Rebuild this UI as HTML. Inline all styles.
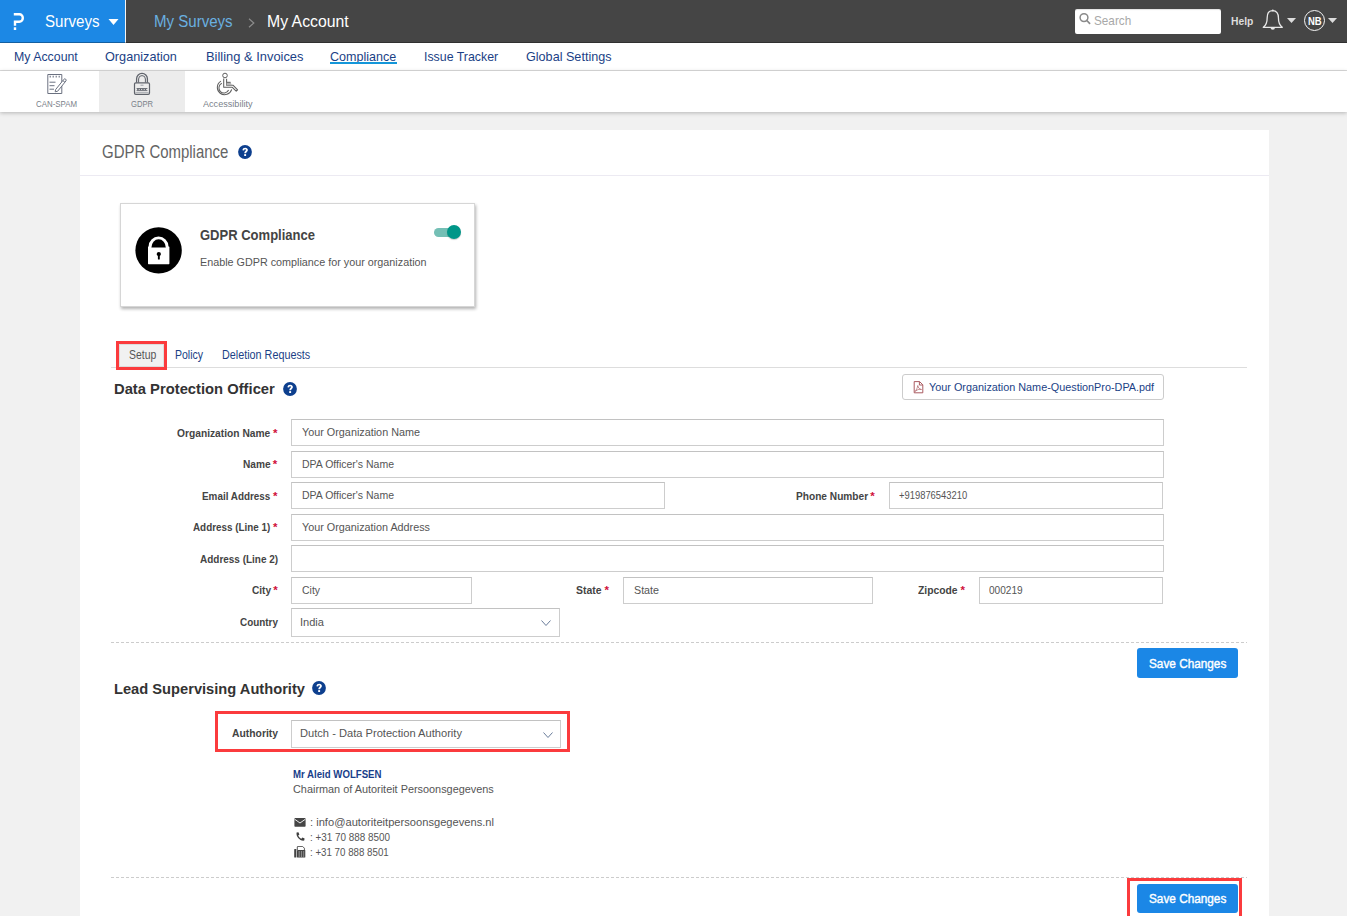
<!DOCTYPE html>
<html><head><meta charset="utf-8"><title>GDPR Compliance</title>
<style>
html,body{margin:0;padding:0;}
body{width:1347px;height:916px;overflow:hidden;position:relative;background:#f1f1f1;font-family:"Liberation Sans",sans-serif;}
.t{position:absolute;white-space:nowrap;line-height:1;}
.inp{position:absolute;box-sizing:border-box;border:1px solid #cdcdcd;border-top-color:#c2c2c2;background:#fff;}
</style></head><body>

<div style="position:absolute;left:0;top:0;width:1347px;height:43px;background:#454545"></div>
<div style="position:absolute;left:0;top:0;width:125px;height:43px;background:#1c88e5"></div>
<div style="position:absolute;left:125px;top:0;width:1px;height:43px;background:#f4f4f4"></div>
<div style="position:absolute;left:0;top:42px;width:1347px;height:1px;background:rgba(0,0,0,.3)"></div>
<div style="position:absolute;left:1075px;top:9px;width:146px;height:25px;background:#fff;border-radius:2px;box-shadow:inset 0 1px 1px rgba(0,0,0,.12)"></div>
<div style="position:absolute;left:0;top:43px;width:1347px;height:27px;background:#fff"></div>
<div style="position:absolute;left:0;top:70px;width:1347px;height:1px;background:#dcdcdc"></div>
<div style="position:absolute;left:0;top:71px;width:1347px;height:41px;background:#fff;box-shadow:0 1px 4px rgba(0,0,0,.25)"></div>
<div style="position:absolute;left:99px;top:71px;width:86px;height:41px;background:#ececec"></div>
<div style="position:absolute;left:80px;top:130px;width:1189px;height:800px;background:#fff"></div>
<div style="position:absolute;left:80px;top:175px;width:1189px;height:1px;background:#eceaf2"></div>
<div class="t" style="left:44.50px;top:14px;font-size:16px;transform:scaleX(0.9436);transform-origin:0 0;color:#fff;">Surveys</div><div class="t" style="left:154.40px;top:14px;font-size:16px;transform:scaleX(0.9402);transform-origin:0 0;color:#6ab0e0;">My Surveys</div><div class="t" style="left:267.00px;top:14px;font-size:16px;transform:scaleX(0.9877);transform-origin:0 0;color:#fff;">My Account</div><div class="t" style="left:1230.70px;top:16px;font-size:11.5px;transform:scaleX(0.8957);transform-origin:0 0;color:#ddd;font-weight:bold;">Help</div><div class="t" style="left:1308.20px;top:16px;font-size:11px;transform:scaleX(0.8619);transform-origin:0 0;color:#fff;font-weight:bold;">NB</div><div class="t" style="left:1093.80px;top:14px;font-size:13.5px;transform:scaleX(0.8693);transform-origin:0 0;color:#a8a8a8;">Search</div><div class="t" style="left:14.00px;top:50px;font-size:13.5px;transform:scaleX(0.9141);transform-origin:0 0;color:#1b3f86;">My Account</div><div class="t" style="left:105.40px;top:50px;font-size:13.5px;transform:scaleX(0.9393);transform-origin:0 0;color:#1b3f86;">Organization</div><div class="t" style="left:205.50px;top:50px;font-size:13.5px;transform:scaleX(0.9553);transform-origin:0 0;color:#1b3f86;">Billing &amp; Invoices</div><div class="t" style="left:330.20px;top:50px;font-size:13.5px;transform:scaleX(0.9287);transform-origin:0 0;color:#1b3f86;">Compliance</div><div class="t" style="left:424.00px;top:50px;font-size:13.5px;transform:scaleX(0.9160);transform-origin:0 0;color:#1b3f86;">Issue Tracker</div><div class="t" style="left:525.50px;top:50px;font-size:13.5px;transform:scaleX(0.9341);transform-origin:0 0;color:#1b3f86;">Global Settings</div><div style="position:absolute;left:330px;top:62px;width:67px;height:2px;background:#1396d9"></div><div class="t" style="left:36.00px;top:99px;font-size:9.5px;transform:scaleX(0.8292);transform-origin:0 0;color:#7a7f8a;">CAN-SPAM</div><div class="t" style="left:131.00px;top:99px;font-size:9.5px;transform:scaleX(0.8013);transform-origin:0 0;color:#7a7f8a;">GDPR</div><div class="t" style="left:202.70px;top:99px;font-size:9.5px;transform:scaleX(0.9569);transform-origin:0 0;color:#7a7f8a;">Accessibility</div><div class="t" style="left:102.40px;top:144px;font-size:17.5px;transform:scaleX(0.8548);transform-origin:0 0;color:#646464;">GDPR Compliance</div><div style="position:absolute;left:120px;top:203px;width:353px;height:102px;border:1px solid #d6d6d6;background:#fff;box-shadow:1px 2px 3px rgba(0,0,0,.3)"></div><div class="t" style="left:200.30px;top:228px;font-size:14px;transform:scaleX(0.9297);transform-origin:0 0;color:#444;font-weight:bold;">GDPR Compliance</div><div class="t" style="left:200.00px;top:257px;font-size:11px;transform:scaleX(0.9801);transform-origin:0 0;color:#555;">Enable GDPR compliance for your organization</div><div style="position:absolute;left:111px;top:367px;width:1136px;height:1px;background:#ddd"></div><div style="position:absolute;left:119px;top:344px;width:45px;height:23px;background:#f1f1f1;border:1px solid #ddd;box-sizing:border-box"></div><div style="position:absolute;left:116px;top:341px;width:51px;height:29px;border:3px solid #fb3b3d;box-sizing:border-box"></div><div class="t" style="left:128.70px;top:349px;font-size:12px;transform:scaleX(0.8700);transform-origin:0 0;color:#555;">Setup</div><div class="t" style="left:174.90px;top:349px;font-size:12px;transform:scaleX(0.8770);transform-origin:0 0;color:#1b3f86;">Policy</div><div class="t" style="left:221.80px;top:349px;font-size:12px;transform:scaleX(0.8996);transform-origin:0 0;color:#1b3f86;">Deletion Requests</div><div class="t" style="left:114.00px;top:381px;font-size:15.5px;transform:scaleX(0.9526);transform-origin:0 0;color:#333;font-weight:bold;">Data Protection Officer</div><div style="position:absolute;left:902px;top:374px;width:262px;height:26px;border:1px solid #ccc;border-radius:3px;box-sizing:border-box"></div><div class="t" style="left:928.50px;top:382px;font-size:11.5px;transform:scaleX(0.9415);transform-origin:0 0;color:#1b3f86;">Your Organization Name-QuestionPro-DPA.pdf</div><div class="inp" style="left:291px;top:419px;width:873px;height:27px"></div><div class="inp" style="left:291px;top:451px;width:873px;height:27px"></div><div class="inp" style="left:291px;top:482px;width:374px;height:27px"></div><div class="inp" style="left:889px;top:482px;width:274px;height:27px"></div><div class="inp" style="left:291px;top:514px;width:873px;height:27px"></div><div class="inp" style="left:291px;top:545px;width:873px;height:27px"></div><div class="inp" style="left:291px;top:577px;width:181px;height:27px"></div><div class="inp" style="left:623px;top:577px;width:250px;height:27px"></div><div class="inp" style="left:979px;top:577px;width:184px;height:27px"></div><div class="inp" style="left:291px;top:608px;width:269px;height:29px"></div><div class="inp" style="left:291px;top:720px;width:270px;height:28px"></div><div class="t" style="left:176.90px;top:428px;font-size:11px;transform:scaleX(0.9305);transform-origin:0 0;color:#444;font-weight:bold;">Organization Name</div><div class="t" style="left:272.90px;top:428px;font-size:11.5px;color:#d0103a;font-weight:bold;">*</div><div class="t" style="left:242.50px;top:459px;font-size:11px;transform:scaleX(0.9208);transform-origin:0 0;color:#444;font-weight:bold;">Name</div><div class="t" style="left:272.80px;top:459px;font-size:11.5px;color:#d0103a;font-weight:bold;">*</div><div class="t" style="left:201.90px;top:491px;font-size:11px;transform:scaleX(0.8986);transform-origin:0 0;color:#444;font-weight:bold;">Email Address</div><div class="t" style="left:272.90px;top:491px;font-size:11.5px;color:#d0103a;font-weight:bold;">*</div><div class="t" style="left:193.00px;top:522px;font-size:11px;transform:scaleX(0.8957);transform-origin:0 0;color:#444;font-weight:bold;">Address (Line 1)</div><div class="t" style="left:272.90px;top:522px;font-size:11.5px;color:#d0103a;font-weight:bold;">*</div><div class="t" style="left:199.90px;top:554px;font-size:11px;transform:scaleX(0.9062);transform-origin:0 0;color:#444;font-weight:bold;">Address (Line 2)</div><div class="t" style="left:251.50px;top:585px;font-size:11px;transform:scaleX(0.9187);transform-origin:0 0;color:#444;font-weight:bold;">City</div><div class="t" style="left:273.30px;top:585px;font-size:11.5px;color:#d0103a;font-weight:bold;">*</div><div class="t" style="left:239.60px;top:617px;font-size:11px;transform:scaleX(0.9008);transform-origin:0 0;color:#444;font-weight:bold;">Country</div><div class="t" style="left:795.50px;top:491px;font-size:11px;transform:scaleX(0.9219);transform-origin:0 0;color:#444;font-weight:bold;">Phone Number</div><div class="t" style="left:870.30px;top:491px;font-size:11.5px;color:#d0103a;font-weight:bold;">*</div><div class="t" style="left:576.30px;top:585px;font-size:11px;transform:scaleX(0.9481);transform-origin:0 0;color:#444;font-weight:bold;">State</div><div class="t" style="left:604.50px;top:585px;font-size:11.5px;color:#d0103a;font-weight:bold;">*</div><div class="t" style="left:918.30px;top:585px;font-size:11px;transform:scaleX(0.9364);transform-origin:0 0;color:#444;font-weight:bold;">Zipcode</div><div class="t" style="left:960.50px;top:585px;font-size:11.5px;color:#d0103a;font-weight:bold;">*</div><div class="t" style="left:301.50px;top:427px;font-size:11px;transform:scaleX(0.9828);transform-origin:0 0;color:#555;">Your Organization Name</div><div class="t" style="left:301.50px;top:459px;font-size:11px;transform:scaleX(0.9537);transform-origin:0 0;color:#555;">DPA Officer's Name</div><div class="t" style="left:301.50px;top:490px;font-size:11px;transform:scaleX(0.9537);transform-origin:0 0;color:#555;">DPA Officer's Name</div><div class="t" style="left:301.50px;top:522px;font-size:11px;transform:scaleX(0.9811);transform-origin:0 0;color:#555;">Your Organization Address</div><div class="t" style="left:899.20px;top:490px;font-size:11px;transform:scaleX(0.8540);transform-origin:0 0;color:#555;">+919876543210</div><div class="t" style="left:301.80px;top:585px;font-size:11px;transform:scaleX(0.9514);transform-origin:0 0;color:#555;">City</div><div class="t" style="left:633.60px;top:585px;font-size:11px;transform:scaleX(0.9733);transform-origin:0 0;color:#555;">State</div><div class="t" style="left:988.60px;top:585px;font-size:11px;transform:scaleX(0.9186);transform-origin:0 0;color:#555;">000219</div><div class="t" style="left:300.20px;top:617px;font-size:11px;transform:scaleX(1.0054);transform-origin:0 0;color:#555;">India</div><div class="t" style="left:300.10px;top:728px;font-size:11px;transform:scaleX(1.0111);transform-origin:0 0;color:#555;">Dutch - Data Protection Authority</div><svg style="position:absolute;left:541px;top:620px" width="10" height="6" viewBox="0 0 10 6"><path d="M0.5 0.5 L5.0 5.5 L9.5 0.5" fill="none" stroke="#6a7c9a" stroke-width="1"/></svg><svg style="position:absolute;left:543px;top:732px" width="10" height="6" viewBox="0 0 10 6"><path d="M0.5 0.5 L5.0 5.5 L9.5 0.5" fill="none" stroke="#6a7c9a" stroke-width="1"/></svg><div style="position:absolute;left:111px;top:642px;width:1136px;height:1px;background:repeating-linear-gradient(90deg,#ccc 0 3px,transparent 3px 5px)"></div><div style="position:absolute;left:111px;top:877px;width:1136px;height:1px;background:repeating-linear-gradient(90deg,#ccc 0 3px,transparent 3px 5px)"></div><div style="position:absolute;left:1137px;top:648px;width:101px;height:30px;background:#1b87e6;border-radius:3px"></div><div class="t" style="left:1148.90px;top:657px;font-size:13px;transform:scaleX(0.9064);transform-origin:0 0;color:#fff;-webkit-text-stroke:0.4px #fff;">Save Changes</div><div style="position:absolute;left:1127px;top:878px;width:115px;height:60px;border:3px solid #fb3b3d;box-sizing:border-box"></div><div style="position:absolute;left:1137px;top:884px;width:101px;height:29px;background:#1b87e6;border-radius:3px"></div><div class="t" style="left:1148.90px;top:892px;font-size:13px;transform:scaleX(0.9064);transform-origin:0 0;color:#fff;-webkit-text-stroke:0.4px #fff;">Save Changes</div><div class="t" style="left:113.60px;top:681px;font-size:15.5px;transform:scaleX(0.9464);transform-origin:0 0;color:#333;font-weight:bold;">Lead Supervising Authority</div><div style="position:absolute;left:215px;top:711px;width:355px;height:41px;border:3px solid #fb3b3d;box-sizing:border-box"></div><div class="t" style="left:231.50px;top:728px;font-size:11px;transform:scaleX(0.9408);transform-origin:0 0;color:#444;font-weight:bold;">Authority</div><div class="t" style="left:293.20px;top:769px;font-size:11px;transform:scaleX(0.8759);transform-origin:0 0;color:#183e8a;font-weight:bold;">Mr Aleid WOLFSEN</div><div class="t" style="left:293.20px;top:784px;font-size:11px;transform:scaleX(0.9891);transform-origin:0 0;color:#555;">Chairman of Autoriteit Persoonsgegevens</div><div class="t" style="left:309.50px;top:817px;font-size:11px;transform:scaleX(1.0122);transform-origin:0 0;color:#555;">: info@autoriteitpersoonsgegevens.nl</div><div class="t" style="left:309.50px;top:832px;font-size:11px;transform:scaleX(0.8990);transform-origin:0 0;color:#555;">: +31 70 888 8500</div><div class="t" style="left:309.50px;top:847px;font-size:11px;transform:scaleX(0.8844);transform-origin:0 0;color:#555;">: +31 70 888 8501</div>
<!-- logo -->
<svg style="position:absolute;left:0;top:0" width="40" height="42" viewBox="0 0 40 42">
<path d="M13.8 13 H19.4 A4.6 5 0 0 1 19.4 23 H16.2 V25.8 H13.8 V20.6 H19.3 A2.3 2.6 0 0 0 19.3 15.4 H13.8 Z" fill="#fff"/>
<rect x="13.8" y="27.3" width="2.4" height="2.7" fill="#fff"/>
</svg>
<!-- surveys caret -->
<svg style="position:absolute;left:108px;top:19px" width="11" height="6" viewBox="0 0 11 6"><path d="M0.5 0 H10.5 L5.5 6 Z" fill="#fff"/></svg>
<!-- breadcrumb chevron -->
<svg style="position:absolute;left:248px;top:18px" width="7" height="10" viewBox="0 0 7 10"><path d="M1 0.8 L5.8 5 L1 9.2" fill="none" stroke="#8c8c8c" stroke-width="1.2"/></svg>
<!-- search box -->
<svg style="position:absolute;left:1078px;top:12px" width="14" height="14" viewBox="0 0 14 14"><circle cx="6" cy="5.6" r="3.9" fill="none" stroke="#8a8a8a" stroke-width="1.5"/><path d="M8.8 8.5 L11.6 11.3" stroke="#8a8a8a" stroke-width="1.7" stroke-linecap="round"/></svg>
<!-- bell -->
<svg style="position:absolute;left:1262px;top:9px" width="22" height="23" viewBox="0 0 22 23">
<path d="M10.8 1.6 C7 1.6 5.2 4.5 5.2 8.5 C5.2 13 4.6 16 1.3 18.3 H20.3 C17 16 16.4 13 16.4 8.5 C16.4 4.5 14.6 1.6 10.8 1.6 Z" fill="none" stroke="#e8e8e8" stroke-width="1.3" stroke-linejoin="round"/>
<circle cx="10.8" cy="1.5" r="1" fill="#e8e8e8"/>
<path d="M8.6 18.6 A2.2 2.2 0 0 0 13 18.6 Z" fill="#e8e8e8"/>
</svg>
<svg style="position:absolute;left:1287px;top:18px" width="9" height="5" viewBox="0 0 9 5"><path d="M0 0 H9 L4.5 5 Z" fill="#dcdcdc"/></svg>
<!-- avatar -->
<div style="position:absolute;left:1303.8px;top:9.9px;width:21.2px;height:21.2px;box-sizing:border-box;border:1.5px solid #f6f6f6;border-radius:50%"></div>
<svg style="position:absolute;left:1328px;top:18px" width="9" height="5" viewBox="0 0 9 5"><path d="M0 0 H9 L4.5 5 Z" fill="#dcdcdc"/></svg>

<!-- subnav icons -->
<svg style="position:absolute;left:45px;top:72px" width="24" height="24" viewBox="0 0 24 24">
<path d="M2.8 2.5 H16.8 V21.5 H2.8 Z" fill="none" stroke="#6b7180" stroke-width="1"/>
<path d="M5.2 3.8 v1.6 M8.2 3.8 v1.6 M11.2 3.8 v1.6 M14.2 3.8 v1.6" stroke="#6b7180" stroke-width="1.1"/>
<path d="M4.5 10.2 H10.5 M4.5 13.7 H9.5 M4.5 17.2 H9" stroke="#6b7180" stroke-width="1"/>
<path d="M10.6 17.6 L18.8 7.4 A1.3 1.3 0 0 1 20.9 9 L12.7 19.2 L10.2 19.8 Z" fill="#fff" stroke="#6b7180" stroke-width="1"/>
<path d="M17.9 8.6 L20 10.3" stroke="#6b7180" stroke-width="1"/>
</svg>
<svg style="position:absolute;left:132px;top:72px" width="21" height="24" viewBox="0 0 21 24">
<path d="M4.6 10.5 V6.8 A5.4 5.4 0 0 1 15.4 6.8 V10.5" fill="none" stroke="#5f636b" stroke-width="1.3"/>
<path d="M6.6 10.5 V7 A3.4 3.4 0 0 1 13.4 7 V10.5" fill="none" stroke="#5f636b" stroke-width="1"/>
<rect x="2.5" y="10.8" width="15" height="11.6" rx="1.3" fill="none" stroke="#5f636b" stroke-width="1.2"/>
<path d="M8.5 13.2 H11.5" stroke="#9a9ea6" stroke-width="1"/>
<path d="M4.6 16.5 H15.4 M4.6 18.6 H15.4" stroke="#5f636b" stroke-width="0.9"/>
<path d="M5.2 17.5 h1.5 M7.7 17.5 h1.5 M10.2 17.5 h1.5 M12.7 17.5 h1.5" stroke="#5f636b" stroke-width="1"/>
<path d="M3.4 20.6 H16.6" stroke="#9a9ea6" stroke-width="0.8"/>
</svg>
<svg style="position:absolute;left:214px;top:72px" width="26" height="24" viewBox="0 0 26 24">
<circle cx="11" cy="3.5" r="2.3" fill="none" stroke="#5f5f5f" stroke-width="1"/>
<path d="M9.7 6.4 V15.3 H18.3 L22.2 19.2 L23.6 17.8 L19.2 13.3 H12.6 V6.7" fill="none" stroke="#5f5f5f" stroke-width="1.05" stroke-linejoin="round"/>
<path d="M12.6 10.3 H16.6 L17.9 13.2 H12.6 Z" fill="#b4b4b4"/>
<path d="M12.6 10.3 H16.6" stroke="#5f5f5f" stroke-width="1"/>
<path d="M7.0 9.1 A7.3 7.3 0 1 0 17.7 17.3" fill="none" stroke="#5f5f5f" stroke-width="1.05"/>
<path d="M7.8 11.3 A5.1 5.1 0 1 0 14.6 18.1" fill="none" stroke="#5f5f5f" stroke-width="1.05"/>
</svg>

<!-- help icons -->
<svg style="position:absolute;left:237.8px;top:145.1px" width="14" height="14" viewBox="0 0 14 14"><circle cx="7" cy="7" r="6.9" fill="#0d3f8e"/><path d="M4.4 5.2 C4.6 3.5 5.7 2.7 7.2 2.7 C8.9 2.7 9.9 3.7 9.9 5 C9.9 6.6 8.2 6.9 8.1 8.2 H6.3 C6.2 6.2 8 5.9 8 5 C8 4.5 7.6 4.2 7.1 4.2 C6.5 4.2 6.2 4.6 6.1 5.4 Z" fill="#fff"/><rect x="6.2" y="9.1" width="1.9" height="1.9" fill="#fff"/></svg>
<svg style="position:absolute;left:282.5px;top:381.7px" width="14" height="14" viewBox="0 0 14 14"><circle cx="7" cy="7" r="6.9" fill="#0d3f8e"/><path d="M4.4 5.2 C4.6 3.5 5.7 2.7 7.2 2.7 C8.9 2.7 9.9 3.7 9.9 5 C9.9 6.6 8.2 6.9 8.1 8.2 H6.3 C6.2 6.2 8 5.9 8 5 C8 4.5 7.6 4.2 7.1 4.2 C6.5 4.2 6.2 4.6 6.1 5.4 Z" fill="#fff"/><rect x="6.2" y="9.1" width="1.9" height="1.9" fill="#fff"/></svg>
<svg style="position:absolute;left:312px;top:681.4px" width="14" height="14" viewBox="0 0 14 14"><circle cx="7" cy="7" r="6.9" fill="#0d3f8e"/><path d="M4.4 5.2 C4.6 3.5 5.7 2.7 7.2 2.7 C8.9 2.7 9.9 3.7 9.9 5 C9.9 6.6 8.2 6.9 8.1 8.2 H6.3 C6.2 6.2 8 5.9 8 5 C8 4.5 7.6 4.2 7.1 4.2 C6.5 4.2 6.2 4.6 6.1 5.4 Z" fill="#fff"/><rect x="6.2" y="9.1" width="1.9" height="1.9" fill="#fff"/></svg>

<!-- card lock circle -->
<svg style="position:absolute;left:135px;top:227px" width="47" height="47" viewBox="0 0 47 47">
<circle cx="23.6" cy="23.4" r="23.2" fill="#000"/>
<path d="M13.6 21 V19.4 A9.95 9.8 0 0 1 33.5 19.4 V21 Z" fill="#fff"/>
<rect x="13" y="19.4" width="21.4" height="17.8" rx="0.6" fill="#fff"/>
<path d="M16.4 20.6 A7.2 8.4 0 0 1 30.8 20.6 Z" fill="#000"/>
<circle cx="23.8" cy="27.1" r="2.1" fill="#000"/>
<rect x="22.9" y="27" width="1.9" height="5.6" rx="0.6" fill="#000"/>
</svg>
<!-- toggle -->
<div style="position:absolute;left:434px;top:228px;width:26px;height:9px;border-radius:5px;background:#74bfb5"></div>
<div style="position:absolute;left:447px;top:225px;width:14px;height:14px;border-radius:50%;background:#009688;box-shadow:0 1px 1px rgba(0,0,0,.2)"></div>

<!-- pdf icon -->
<svg style="position:absolute;left:913px;top:381px" width="11" height="13" viewBox="0 0 11 13">
<path d="M1.2 0.6 H6.6 L9.8 3.8 V11.8 H1.2 Z" fill="none" stroke="#a24950" stroke-width="0.9"/>
<path d="M6.4 0.8 V4 H9.6" fill="none" stroke="#a24950" stroke-width="0.9"/>
<path d="M2 10.5 C3.5 9 4.5 6.5 4.8 4.5 C5 6.5 6.5 8.5 8.5 8.5 C7 8.1 5 8 2 10.5 Z" fill="none" stroke="#a24950" stroke-width="0.6"/>
</svg>

<!-- contact icons -->
<svg style="position:absolute;left:294px;top:817px" width="12" height="11" viewBox="0 0 12 11">
<rect x="0.4" y="1" width="11.2" height="8.7" rx="0.8" fill="#454545"/>
<path d="M0.6 2.2 L6 6 L11.4 2.2" fill="none" stroke="#fff" stroke-width="0.9"/>
</svg>
<svg style="position:absolute;left:295px;top:832px" width="10" height="10" viewBox="0 0 10 10">
<path d="M1.6 0.6 L3.4 0.2 L4.4 2.6 L3.2 3.6 C3.8 5 5 6.2 6.4 6.8 L7.4 5.6 L9.6 6.6 L9.2 8.6 C5 9.2 0.8 5 1.6 0.6 Z" fill="#3e3e3e"/>
</svg>
<svg style="position:absolute;left:294px;top:846px" width="12" height="12" viewBox="0 0 12 12">
<rect x="0.2" y="3" width="2.2" height="8.6" rx="0.6" fill="#444"/>
<path d="M3.3 4 V1 A0.6 0.6 0 0 1 3.9 0.4 H8.6 L10.4 2.2 V4" fill="none" stroke="#444" stroke-width="0.9"/>
<rect x="3" y="4" width="8.3" height="7.6" rx="0.6" fill="#444"/>
<path d="M4.6 6 h1.2 M6.9 6 h1.2 M9.2 6 h1 M4.6 8 h1.2 M6.9 8 h1.2 M9.2 8 h1 M4.6 10 h1.2 M6.9 10 h1.2 M9.2 10 h1" stroke="#cfcfcf" stroke-width="1"/>
</svg>

</body></html>
